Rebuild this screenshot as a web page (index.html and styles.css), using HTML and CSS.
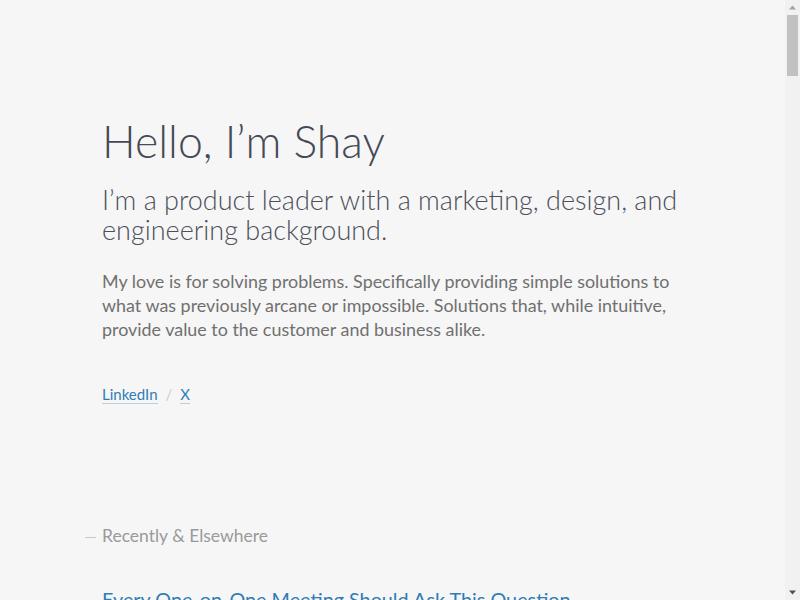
FILE: index.html
```html
<!DOCTYPE html>
<html lang="en">
<head>
<meta charset="utf-8">
<title>Shay</title>
<link rel="stylesheet" href="styles.css">
</head>
<body>
<main class="page">
  <header class="intro">
    <h1 class="title">Hello, I’m Shay</h1>
    <p class="lead">I’m a product leader with a marketing, design, and engineering background.</p>
    <p class="bio">My love is for solving problems. Specifically providing simple solutions to what was previously arcane or impossible. Solutions that, while intuitive, provide value to the customer and business alike.</p>
    <nav class="social">
      <a href="#">LinkedIn</a><span class="sep">/</span><a href="#">X</a>
    </nav>
  </header>
  <section class="recent">
    <h2 class="section-title">Recently &amp; Elsewhere</h2>
    <article class="post">
      <h3 class="post-title"><a href="#">Every One-on-One Meeting Should Ask This Question</a></h3>
      <p class="post-text">A simple question that surfaces what matters most to the people on your team.</p>
    </article>
    <article class="post">
      <h3 class="post-title"><a href="#">Shipping Is a Feature</a></h3>
      <p class="post-text">Why momentum beats perfection when building products customers love.</p>
    </article>
    <article class="post">
      <h3 class="post-title"><a href="#">Designing for the Arcane</a></h3>
      <p class="post-text">Making complex systems feel simple without hiding their power.</p>
    </article>
  </section>
</main>
<div class="scrollbar" aria-hidden="true">
  <svg class="arrow" width="15" height="15" viewBox="0 0 15 15"><path d="M4 9.5 L7.5 5.5 L11 9.5 Z" fill="#a3a3a3"/></svg>
  <div class="thumb"></div>
  <div class="track"></div>
  <svg class="arrow" width="15" height="15" viewBox="0 0 15 15"><path d="M4 5.5 L7.5 9.5 L11 5.5 Z" fill="#505050"/></svg>
</div>
</body>
</html>
```
FILE: styles.css
```css
html, body {
  margin: 0;
  padding: 0;
  background: #f6f6f6;
}
body {
  font-family: Lato, "Noto Sans", sans-serif;
  color: #474c57;
}
.page {
  padding: 111px 0 0 102px;
  max-width: 590px;
  min-height: 1400px;
}
.title {
  margin: 0;
  font-weight: 300;
  font-size: 44.6px;
  line-height: 60px;
  color: #454a55;
}
.lead {
  margin: 14px 0 0;
  font-weight: 300;
  font-size: 27px;
  line-height: 30px;
  color: #4c505a;
}
.bio {
  margin: 24px 0 0;
  font-size: 17.9px;
  line-height: 24px;
  color: #707070;
}
.social {
  margin-top: 43px;
  font-size: 15px;
  line-height: 20px;
}
.social a {
  color: #2f7db5;
  text-decoration: none;
  border-bottom: 1px solid #b9cfe0;
}
.sep {
  color: #cccccc;
  margin: 0 8px;
}
.recent {
  margin-top: 120px;
}
.section-title {
  position: relative;
  margin: 0;
  font-weight: 400;
  font-size: 17.5px;
  line-height: 24px;
  color: #9a9a9a;
}
.section-title::before {
  content: "";
  position: absolute;
  left: -17px;
  top: 13px;
  width: 11px;
  border-top: 1px solid #c8c8c8;
}
.post {
  margin-top: 37px;
}
.post-title {
  margin: 0;
  font-weight: 400;
  font-size: 19.8px;
  line-height: 28px;
}
.post-title a {
  color: #2f7db5;
  text-decoration: none;
}
.post-text {
  margin: 8px 0 0;
  font-size: 18px;
  line-height: 24px;
  color: #707070;
}
.scrollbar {
  position: fixed;
  top: 0;
  right: 0;
  width: 15px;
  height: 100vh;
  background: #f1f1f1;
  display: flex;
  flex-direction: column;
}
.arrow {
  display: block;
  flex: none;
}
.thumb {
  flex: none;
  height: 61px;
  margin: 0 2px;
  background: #c1c1c1;
}
.track {
  flex: 1;
}
```
